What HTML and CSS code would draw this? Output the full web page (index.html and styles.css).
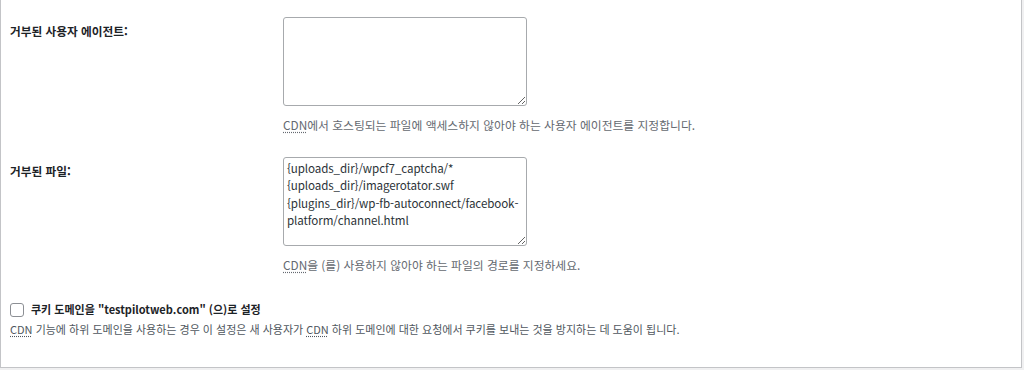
FILE: index.html
```html
<!DOCTYPE html>
<html lang="ko">
<head>
<meta charset="utf-8">
<title>CDN 설정</title>
<link rel="stylesheet" href="styles.css">
</head>
<body>
<div class="panel">
  <div class="row first">
    <label class="label" for="ua">거부된 사용자 에이전트:</label>
    <div class="field">
      <textarea id="ua" class="input"></textarea>
      <p class="desc"><abbr title="Content Delivery Network">CDN</abbr>에서 호스팅되는 파일에 액세스하지 않아야 하는 사용자 에이전트를 지정합니다.</p>
    </div>
  </div>
  <div class="row second">
    <label class="label" for="files">거부된 파일:</label>
    <div class="field">
      <textarea id="files" class="input">{uploads_dir}/wpcf7_captcha/*
{uploads_dir}/imagerotator.swf
{plugins_dir}/wp-fb-autoconnect/facebook-platform/channel.html</textarea>
      <p class="desc"><abbr title="Content Delivery Network">CDN</abbr>을 (를) 사용하지 않아야 하는 파일의 경로를 지정하세요.</p>
    </div>
  </div>
  <div class="check-row">
    <label class="check-label"><input type="checkbox" class="check"> 쿠키 도메인을 "testpilotweb.com" (으)로 설정</label>
    <p class="desc check-desc"><abbr title="Content Delivery Network">CDN</abbr> 기능에 하위 도메인을 사용하는 경우 이 설정은 새 사용자가 <abbr title="Content Delivery Network">CDN</abbr> 하위 도메인에 대한 요청에서 쿠키를 보내는 것을 방지하는 데 도움이 됩니다.</p>
  </div>
</div>
</body>
</html>
```

FILE: styles.css
```css
html, body {
  margin: 0;
  padding: 0;
  background: #f0f0f1;
}
body {
  width: 1024px;
  height: 370px;
  overflow: hidden;
  font-family: "Noto Sans CJK KR", "Noto Sans", sans-serif;
  color: #1d2327;
}
.panel {
  box-sizing: border-box;
  width: 1022px;
  height: 368px;
  background: #fff;
  border: 1px solid #c3c4c7;
  border-top: none;
  padding: 0 9px;
}
.row {
  display: grid;
  grid-template-columns: 273px 244px;
}
.row.first {
  padding-top: 17px;
}
.row.second {
  padding-top: 25px;
}
.label {
  font-size: 11.7px;
  font-weight: 700;
  line-height: 15px;
  padding-top: 6px;
}
.field {
  display: flex;
  flex-direction: column;
}
.input {
  box-sizing: border-box;
  width: 244px;
  height: 89px;
  margin: 0;
  padding: 2px 2px 2px 3px;
  border: 1px solid #a7aaad;
  border-radius: 3px;
  background: #fff;
  font-family: "Noto Sans CJK KR", "Noto Sans", sans-serif;
  font-size: 11.6px;
  letter-spacing: -0.1px;
  line-height: 17.3px;
  color: #2c3338;
  overflow: hidden;
  resize: vertical;
}
.desc {
  margin: 11px 0 0;
  font-size: 11.8px;
  line-height: 15px;
  color: #646970;
  white-space: nowrap;
}
abbr {
  text-decoration: underline dotted;
  text-underline-offset: 2px;
}
.check-row {
  padding-top: 29px;
}
.check-label {
  display: flex;
  align-items: center;
  gap: 7px;
  font-size: 11px;
  font-weight: 700;
  line-height: 17px;
}
.check {
  appearance: none;
  -webkit-appearance: none;
  box-sizing: border-box;
  width: 14px;
  height: 14px;
  margin: 0;
  border: 1px solid #8c8f94;
  border-radius: 3px;
  background: #fff;
}
.check-desc {
  margin-top: 3px;
  font-size: 11px;
  line-height: 17px;
  color: #50575e;
}
```
